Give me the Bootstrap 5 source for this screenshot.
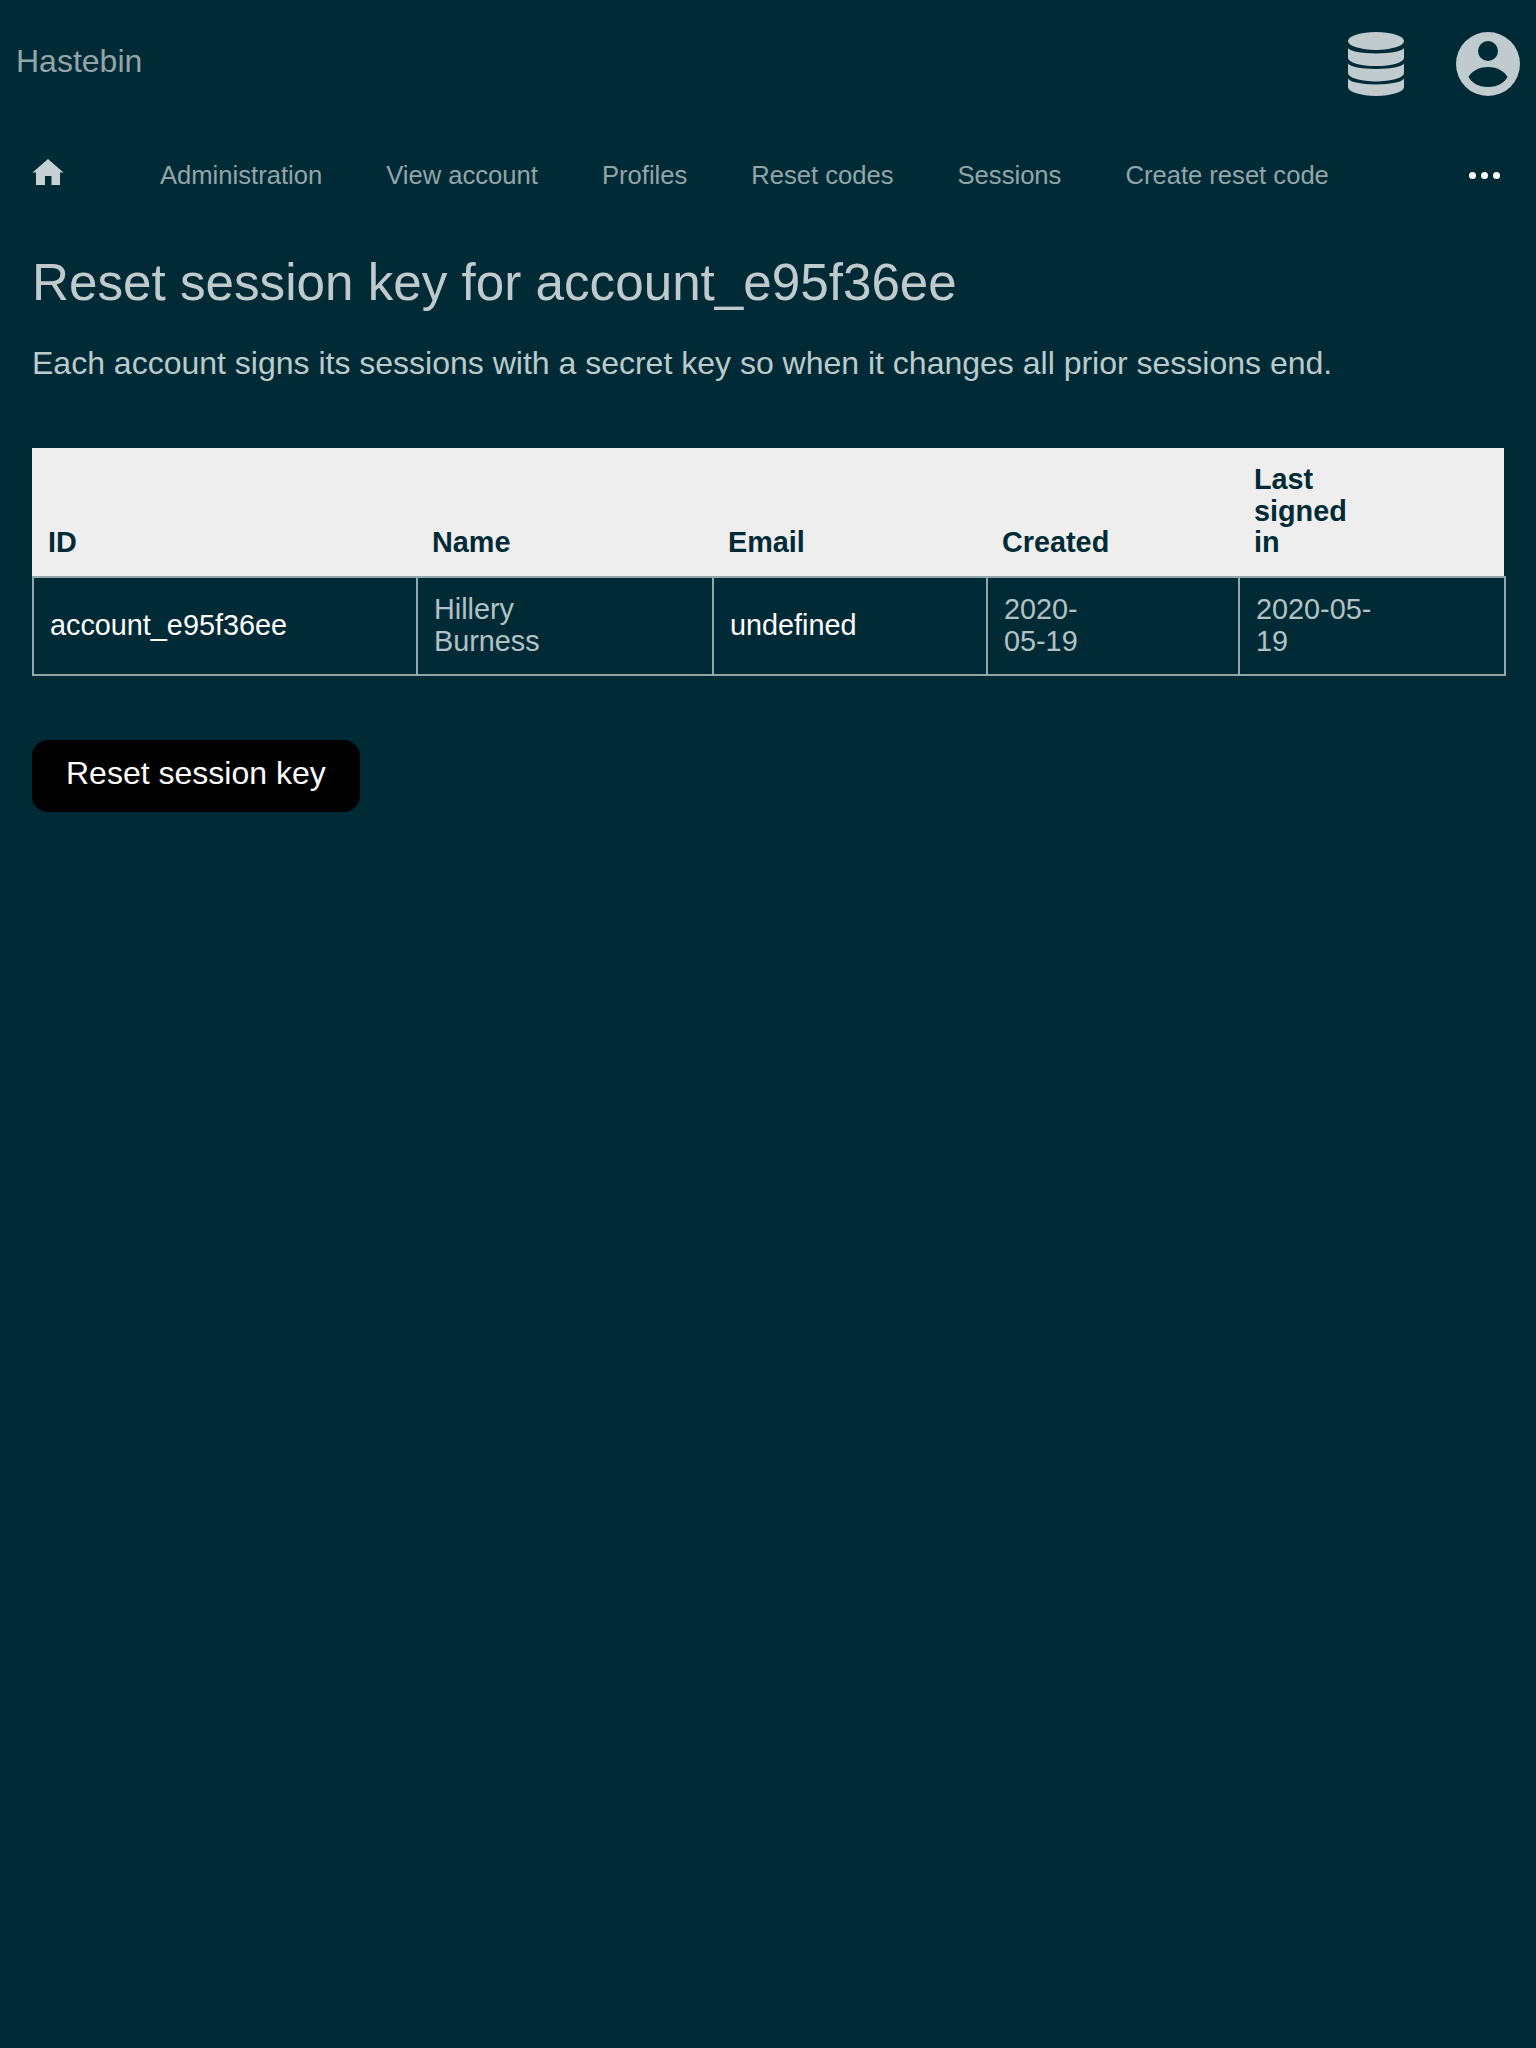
<!DOCTYPE html>
<html lang="en">
<head>
    <meta charset="UTF-8">
    <meta name="viewport" content="width=device-width, initial-scale=1.0">
    <title>Hastebin</title>
    <link href="https://cdn.jsdelivr.net/npm/bootstrap@5.3.0/dist/css/bootstrap.min.css" rel="stylesheet">
    <style>
        html, body { height: 100%; }
        body { background: #002b36; color: #c0cacc; font-family: "Liberation Sans", Arial, sans-serif; min-height: 2048px; }
        .top-bar { height: 124px; padding: 0 16px 2px 16px; }
        .brand-link { color: #93a5a8; font-size: 32px; line-height: 1; text-decoration: none; }
        .top-icons { gap: 52px; padding-top: 6px; }
        .top-icon { display: block; fill: #bfcbcd; }
        .main-nav { height: 102px; padding: 0 36px 0 32px; }
        .main-nav a { color: #93a5a8; font-size: 25.6px; line-height: 1.2; text-decoration: none; margin-right: 64px; }
        .main-nav a.home-link { margin-right: 96px; line-height: 0; padding-bottom: 6px; }
        .more-dots { gap: 5px; }
        .more-dots span { width: 7px; height: 7px; border-radius: 50%; background: #fff; display: block; }
        .page-body { padding: 26px 32px 0; }
        .page-title { font-size: 51.2px; line-height: 1.2; font-weight: 400; color: #c0cacc; margin: 0 0 31px; }
        .page-intro { font-size: 32px; line-height: 1.2; margin: 0 0 65px; color: #bccacc; }
        .acct-table { width: 1474px; table-layout: fixed; border-collapse: separate; border-spacing: 0; margin: 0 0 63.600px; font-size: 28.8px; line-height: 1.1; }
        .acct-table th { background: #eee; color: #002b36; font-weight: 700; vertical-align: bottom; padding: 16px 128px 17px 16px; }
        .acct-table th:last-child { border-right: 2px solid #002b36; }
        .acct-table td { border: solid #93a7ab; border-width: 2px 0 2px 2px; padding: 16px 128px 17px 16px; vertical-align: middle; color: #b3c1c4; }
        .acct-table td:last-child { border-right-width: 2px; }
        .acct-table td.strong-cell { color: #fff; }
        .col-id { width: 384px; }
        .col-name { width: 296px; }
        .col-email { width: 274px; }
        .col-created { width: 252px; }
        .reset-btn { background: #000; color: #fff; border: 0; border-radius: 16px; font-size: 32px; line-height: 40px; padding: 13px 34px 19px; height: 72px; }
        .reset-btn:hover { background: #000; color: #fff; }
    </style>
</head>
<body>
<!-- Brand and account icons -->
<div class="top-bar d-flex align-items-center justify-content-between">
    <a class="brand-link" href="#">Hastebin</a>
    <div class="top-icons d-flex align-items-center">
        <svg class="top-icon" width="56" height="64" viewBox="0 0 56 64" aria-hidden="true">
            <ellipse cx="28" cy="9" rx="28" ry="9"/>
            <path d="M0 15.500A28 6 0 0 0 56 15.500V26A28 8 0 0 1 0 26Z"/>
            <path d="M0 31A28 6 0 0 0 56 31V41A28 8.500 0 0 1 0 41Z"/>
            <path d="M0 46A28 6.500 0 0 0 56 46V55A28 9 0 0 1 0 55Z"/>
        </svg>
        <svg class="top-icon" width="64" height="64" viewBox="0 0 64 64" aria-hidden="true">
            <path fill-rule="evenodd" d="M32 0a32 32 0 1 1 0 64A32 32 0 0 1 32 0ZM32 9a10 10 0 1 0 0 20a10 10 0 0 0 0-20ZM32 35C22 35 15 40 12.500 45C15 50 22 55 32 55S49 50 51.500 45C49 40 42 35 32 35Z"/>
        </svg>
    </div>
</div>

<!-- Main navigation -->
<nav class="main-nav d-flex align-items-center">
    <a class="home-link" href="#">
        <svg width="32" height="26" viewBox="0 0 32 26" aria-hidden="true">
            <path fill="#c6d0d2" d="M16 0L31.500 13.500H28V26H19.500V17H13V26H4V13.500H0.500Z"/>
        </svg>
    </a>
    <a href="#">Administration</a>
    <a href="#">View account</a>
    <a href="#">Profiles</a>
    <a href="#">Reset codes</a>
    <a href="#">Sessions</a>
    <a href="#">Create reset code</a>
    <div class="more-dots d-flex ms-auto"><span></span><span></span><span></span></div>
</nav>

<!-- Page content -->
<main class="page-body">
    <h1 class="page-title">Reset session key for account_e95f36ee</h1>
    <p class="page-intro">Each account signs its sessions with a secret key so when it changes all prior sessions end.</p>

    <table class="acct-table">
        <colgroup>
            <col class="col-id"><col class="col-name"><col class="col-email"><col class="col-created"><col>
        </colgroup>
        <thead>
            <tr><th>ID</th><th>Name</th><th>Email</th><th>Created</th><th>Last signed in</th></tr>
        </thead>
        <tbody>
            <tr>
                <td class="strong-cell">account_e95f36ee</td>
                <td>Hillery Burness</td>
                <td class="strong-cell">undefined</td>
                <td>2020-05-19</td>
                <td>2020-05-19</td>
            </tr>
        </tbody>
    </table>

    <button type="button" class="btn reset-btn">Reset session key</button>
</main>

<script src="https://cdn.jsdelivr.net/npm/bootstrap@5.3.0/dist/js/bootstrap.bundle.min.js"></script>
</body>
</html>
